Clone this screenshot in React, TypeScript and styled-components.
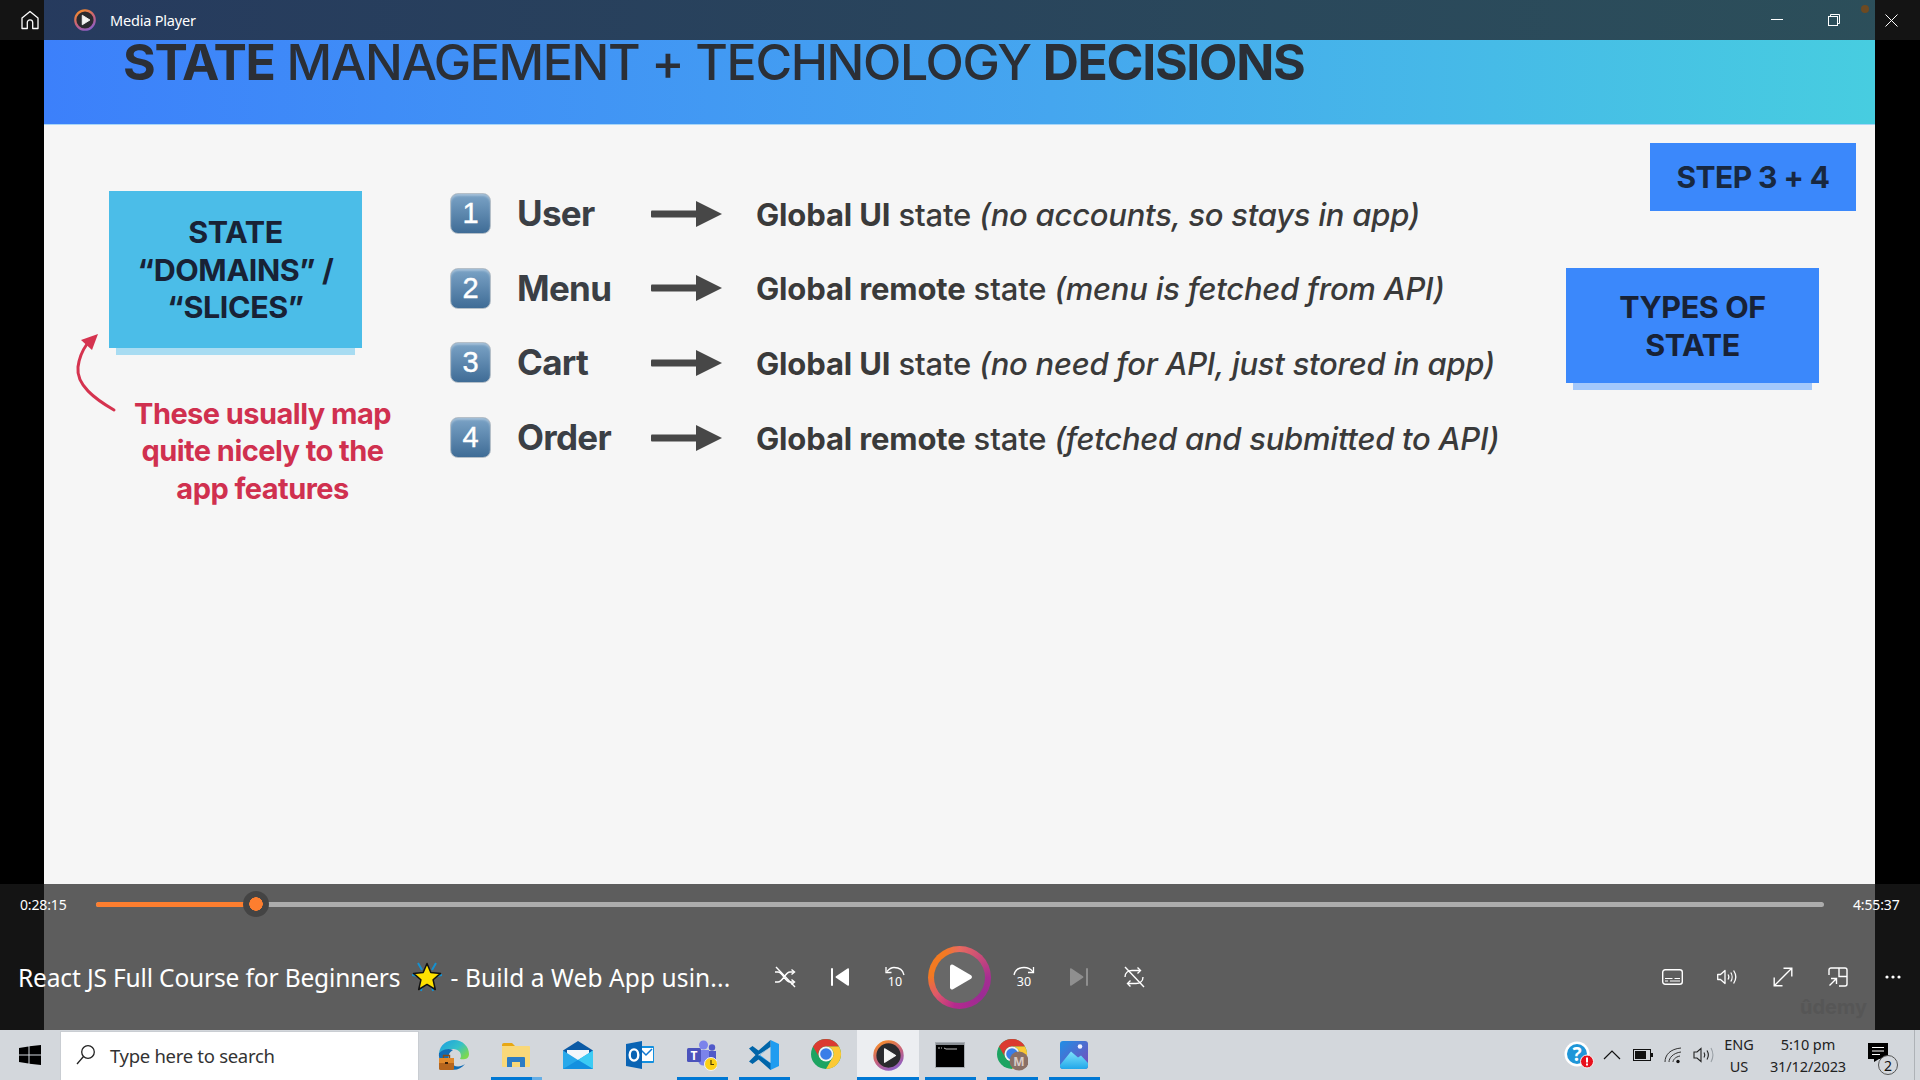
import React from 'react';
import styled, { createGlobalStyle } from 'styled-components';

const UI_FONT = `"Noto Sans", "Open Sans", sans-serif`;
const SLIDE_FONT = `Inter, "Liberation Sans", sans-serif`;

const GlobalStyle = createGlobalStyle`
  html, body {
    margin: 0;
    padding: 0;
    background: #000;
    overflow: hidden;
  }
  * {
    box-sizing: border-box;
  }
`;

const SEEK_PERCENT = 9.26;

const ROWS = [
  { n: 1, name: 'User', bold: 'Global UI', note: '(no accounts, so stays in app)' },
  { n: 2, name: 'Menu', bold: 'Global remote', note: '(menu is fetched from API)' },
  { n: 3, name: 'Cart', bold: 'Global UI', note: '(no need for API, just stored in app)' },
  { n: 4, name: 'Order', bold: 'Global remote', note: '(fetched and submitted to API)' },
];

/* title bar icons */
const HomeIcon = () => (
  <svg width="20" height="20" viewBox="0 0 20 20" fill="none" stroke="#fff" strokeWidth="1.3">
    <path d="M2 18.5V8L10 1.5L18 8V18.5H12.7V12.5a2.7 2.7 0 0 0-5.4 0V18.5Z" strokeLinejoin="round" />
  </svg>
);

const PlayerLogo = ({ size }: { size: number }) => (
  <svg width={size} height={size} viewBox="0 0 24 24">
    <defs>
      <linearGradient id={`lg${size}`} x1="0.2" y1="0" x2="0.7" y2="1">
        <stop offset="0" stopColor="#f58a2c" />
        <stop offset="0.55" stopColor="#c4607e" />
        <stop offset="1" stopColor="#8e5fc4" />
      </linearGradient>
    </defs>
    <circle cx="12" cy="12" r="10.6" fill="#2a2a2e" stroke={`url(#lg${size})`} strokeWidth="2.4" />
    <path d="M9 6.8L17.4 12L9 17.2Z" fill="#f4f4f4" stroke="#f4f4f4" strokeWidth="1" strokeLinejoin="round" />
  </svg>
);

const MinIcon = () => (
  <svg width="12" height="2" viewBox="0 0 12 2"><rect width="12" height="1" fill="#fff" /></svg>
);

const RestoreIcon = () => (
  <svg width="12" height="12" viewBox="0 0 12 12" fill="none" stroke="#fff" strokeWidth="1">
    <rect x="0.5" y="2.5" width="9" height="9" />
    <path d="M2.5 2.5V0.5H11.5V9.5H9.5" />
  </svg>
);

const CloseIcon = () => (
  <svg width="13" height="13" viewBox="0 0 13 13" stroke="#fff" strokeWidth="1">
    <path d="M0.5 0.5L12.5 12.5M12.5 0.5L0.5 12.5" />
  </svg>
);

/* slide */
const CurvedArrow = () => (
  <svg width="50" height="90" viewBox="0 0 50 90" fill="none">
    <path d="M41 81C22 70 3 56 5 38C6 30 9 22 14 15" stroke="#d5334f" strokeWidth="3" strokeLinecap="round" />
    <path d="M25 5L8 11L19 21Z" fill="#d5334f" />
  </svg>
);

const RowArrow = () => (
  <svg width="71" height="26" viewBox="0 0 71 26">
    <rect x="0" y="9.5" width="48" height="7" rx="1" fill="#474747" />
    <path d="M45 0L71 13L45 26Z" fill="#474747" />
  </svg>
);

/* player controls */
const ShuffleIcon = () => (
  <svg width="22" height="22" viewBox="0 0 22 22" fill="none" stroke="#fff" strokeWidth="1.4">
    <path d="M1 6H4C9 6 11 16 16 16H20M1 16H4C9 16 11 6 16 6H20" />
    <path d="M17.5 3.5L20.5 6L17.5 8.5M17.5 13.5L20.5 16L17.5 18.5" />
    <path d="M2 1L21 21" />
  </svg>
);

const SkipIcon = ({ next }: { next?: boolean }) => (
  <svg width="20" height="20" viewBox="0 0 20 20" fill={next ? '#8f8f8f' : '#fff'}>
    <g transform={next ? 'matrix(-1 0 0 1 20 0)' : undefined}>
      <rect x="1" y="1" width="2" height="18" rx="1" />
      <path d="M19 2.2V17.8a1 1 0 0 1-1.5 .8L6 10.8a1 1 0 0 1 0-1.6L17.5 1.4a1 1 0 0 1 1.5 .8Z" />
    </g>
  </svg>
);

const JumpIcon = ({ label, forward }: { label: string; forward?: boolean }) => (
  <svg width="24" height="26" viewBox="0 -2 24 26" fill="none" stroke="#fff" strokeWidth="1.3">
    {forward ? (
      <g>
        <path d="M2 9C3 4 7 1.500 12 1.500C16 1.500 19 3 21 6" />
        <path d="M21.500 1V6.500H16" />
      </g>
    ) : (
      <g>
        <path d="M21 9C20 4 16 1.500 11 1.500C8 1.500 6 3 4 5.500" />
        <path d="M3 1V6.500H8.500" />
      </g>
    )}
    <text x="12" y="20" textAnchor="middle" fontSize="12.5" fill="#fff" stroke="none" fontFamily={UI_FONT}>{label}</text>
  </svg>
);

const RepeatOffIcon = () => (
  <svg width="22" height="22" viewBox="0 0 22 22" fill="none" stroke="#fff" strokeWidth="1.4">
    <path d="M2 11C2 7 5 4.500 9 4.500H17M20 11C20 15 17 17.500 13 17.500H5" />
    <path d="M14.500 1.500L17.500 4.500L14.500 7.500M7.500 14.500L4.500 17.500L7.500 20.500" />
    <path d="M2 1L21 21" />
  </svg>
);

const PlayIcon = () => (
  <svg width="24" height="28" viewBox="0 0 24 28" fill="#fff">
    <path d="M1 3.500V24.500a2 2 0 0 0 3 1.700L22 15.700a2 2 0 0 0 0-3.400L4 1.800a2 2 0 0 0-3 1.700Z" />
  </svg>
);

const CaptionsIcon = () => (
  <svg width="21" height="16" viewBox="0 0 21 16" fill="none" stroke="#fff" strokeWidth="1.4">
    <rect x="0.7" y="0.7" width="19.600" height="14.600" rx="2.500" />
    <path d="M3 9.500H10.500M12.500 9.500H18M3 12H6M8 12H18" strokeWidth="1.200" />
  </svg>
);

const VolumeIcon = () => (
  <svg width="21" height="16" viewBox="0 0 21 16" fill="none" stroke="#fff" strokeWidth="1.300">
    <path d="M0.700 5.500H3.500L8 1.500V14.500L3.500 10.500H0.700Z" strokeLinejoin="round" />
    <path d="M11 5.500C12 7 12 9 11 10.500M13.800 3.500C15.500 6 15.500 10 13.800 12.500M16.600 1.500C19.300 5.500 19.300 10.500 16.600 14.500" />
  </svg>
);

const ExpandIcon = () => (
  <svg width="20" height="20" viewBox="0 0 20 20" fill="none" stroke="#fff" strokeWidth="1.400">
    <path d="M1.500 18.500L18.500 1.500M10.500 1.200H18.800V9.500M1.200 10.500V18.800H9.500" />
  </svg>
);

const MiniIcon = () => (
  <svg width="20" height="20" viewBox="0 0 20 20" fill="none" stroke="#fff" strokeWidth="1.400">
    <path d="M1 8V3a2 2 0 0 1 2-2H17a2 2 0 0 1 2 2V17a2 2 0 0 1-2 2H11" />
    <path d="M11 1V9.500H19" />
    <path d="M1.500 18.500L8 12M3 11.500H8.500V17" />
  </svg>
);

const DotsIcon = () => (
  <svg width="16" height="4" viewBox="0 0 16 4" fill="#fff">
    <circle cx="2" cy="2" r="1.600" />
    <circle cx="8" cy="2" r="1.600" />
    <circle cx="14" cy="2" r="1.600" />
  </svg>
);

const StarIcon = () => (
  <svg width="30" height="30" viewBox="0 0 30 30">
    <g stroke="#1590cf" strokeWidth="2">
      <path d="M6 1L10 8M24 1L20 8M0 13L5 14M30 13L25 14M9 29L10 24M21 29L20 24" />
    </g>
    <path d="M15 1.500L18.800 10.500L28.500 11.400L21.100 17.800L23.300 27.500L15 22.400L6.700 27.500L8.900 17.800L1.500 11.400L11.200 10.500Z" fill="#ffe100" stroke="#111" strokeWidth="1.500" strokeLinejoin="round" />
  </svg>
);

/* taskbar */
const WindowsIcon = () => (
  <svg width="22" height="20" viewBox="0 0 22 20" fill="#000">
    <path d="M0 2.900L9.500 1.500V9.500H0ZM10.500 1.300L22 0V9.500H10.500ZM0 10.500H9.500V18.500L0 17.100ZM10.500 10.500H22V20L10.500 18.700Z" />
  </svg>
);

const SearchIcon = () => (
  <svg width="20" height="22" viewBox="0 0 20 22" fill="none" stroke="#222" strokeWidth="1.300">
    <circle cx="12" cy="8" r="6.300" />
    <path d="M7.500 12.500L1 20" />
  </svg>
);

const EdgeIcon = () => (
  <svg width="32" height="32" viewBox="0 0 32 32">
    <defs>
      <linearGradient id="edgeA" x1="0" y1="0" x2="1" y2="0.700">
        <stop offset="0" stopColor="#1b9de2" />
        <stop offset="0.6" stopColor="#35c1c8" />
        <stop offset="1" stopColor="#7dd84f" />
      </linearGradient>
    </defs>
    <path d="M1 14C2 6 9 1 16 1C25 1 31 8 31 15C31 20 26 21 22 20C24 17 23 12 18 10.500C11 9 5 11 1 14Z" fill="url(#edgeA)" />
    <path d="M1 14C5 10 11 9 15 11C11 13 9 18 12 23C15 28 22 29 27 25C23 30 17 32 12 30C5 28 0 21 1 14Z" fill="#0f6cb5" />
    <rect x="1" y="19" width="15" height="12" rx="1.500" fill="#b5651d" />
    <rect x="1" y="19" width="15" height="5" fill="#e0892b" />
    <path d="M5.500 19V16.500H11.500V19" fill="none" stroke="#8a4a12" strokeWidth="1.400" />
    <rect x="7" y="23" width="3" height="2" fill="#3d2208" />
  </svg>
);

const FolderIcon = () => (
  <svg width="28" height="24" viewBox="0 0 28 24">
    <path d="M0 2a2 2 0 0 1 2-2H10L13 3H0Z" fill="#e8a713" />
    <rect x="0" y="3" width="28" height="21" rx="1" fill="#f9d879" />
    <path d="M5 24V15a1 1 0 0 1 1-1H22a1 1 0 0 1 1 1V24H18V19H10V24Z" fill="#2c7cc4" />
  </svg>
);

const MailIcon = () => (
  <svg width="30" height="28" viewBox="0 0 30 28">
    <path d="M0 9.500L15 0L30 9.500V12H0Z" fill="#0b5aa5" />
    <path d="M4 9H26V16L15 21L4 16Z" fill="#f3f7fb" />
    <path d="M0 9.500L15 19L30 9.500V28H0Z" fill="#28a8ea" />
    <path d="M15 19L30 9.500V28Z" fill="#3ccbf4" />
    <path d="M0 28L15 19L30 28Z" fill="#1490df" />
  </svg>
);

const OutlookIcon = () => (
  <svg width="28" height="28" viewBox="0 0 28 28">
    <rect x="12" y="5" width="16" height="17" rx="1" fill="#1490df" />
    <rect x="14" y="7" width="13" height="13" fill="#fff" />
    <path d="M15 9L20 14L26 8" fill="none" stroke="#0f78d4" strokeWidth="1.500" />
    <path d="M0 3L16 0V28L0 25Z" fill="#0a64b4" />
    <ellipse cx="8" cy="14" rx="4.300" ry="5.600" fill="none" stroke="#fff" strokeWidth="2.400" />
  </svg>
);

const TeamsIcon = () => (
  <svg width="30" height="31" viewBox="0 0 30 31">
    <circle cx="16.500" cy="5" r="4.500" fill="#7b83eb" />
    <circle cx="25" cy="7.500" r="3.200" fill="#5059c9" />
    <path d="M11 10H22V20a5.500 5.500 0 0 1-11 0Z" fill="#7b83eb" />
    <path d="M22 11H29V19a4 4 0 0 1-7 2Z" fill="#5059c9" />
    <rect x="0" y="8" width="14" height="14" rx="1.500" fill="#4b53bc" />
    <text x="7" y="19.500" textAnchor="middle" fontSize="12" fontWeight="700" fill="#fff" fontFamily={UI_FONT}>T</text>
    <circle cx="24" cy="24" r="6.500" fill="#fcd116" stroke="#f4f4f4" strokeWidth="1" />
    <path d="M24 20V24.500H27" fill="none" stroke="#4a3b00" strokeWidth="1.200" />
  </svg>
);

const VSCodeIcon = () => (
  <svg width="30" height="30" viewBox="0 0 30 30">
    <path d="M21.500 0L30 4V26L21.500 30L8 17L21.500 7Z" fill="#1f9cf0" />
    <path d="M21.500 0L21.500 7L9 15L21.500 23V30L9.500 19.500L3.500 24L0 21.500L6.500 15L0 8.500L3.500 6L9.500 10.500Z" fill="#0065a9" />
    <path d="M21.500 7V23L11 15Z" fill="#d3d7dc" />
  </svg>
);

const ChromeIcon = ({ badge }: { badge?: boolean }) => (
  <svg width="32" height="32" viewBox="-1 0 32 32">
    <circle cx="15" cy="15" r="15" fill="#1da462" />
    <path d="M15 0A15 15 0 0 1 28 7.500H15A7.500 7.500 0 0 0 8.500 18.800L2 7.500A15 15 0 0 1 15 0Z" fill="#db3a30" />
    <path d="M28 7.500A15 15 0 0 1 15 30L21.500 18.800A7.500 7.500 0 0 0 15 7.500Z" fill="#fcc934" />
    <circle cx="15" cy="15" r="7.500" fill="#f4f4f4" />
    <circle cx="15" cy="15" r="5.800" fill="#3a7ee8" />
    {badge && (
      <g>
        <circle cx="22" cy="22" r="9.500" fill="#8a7066" />
        <text x="22" y="26.500" textAnchor="middle" fontSize="12" fontWeight="700" fill="#d9ccc6" fontFamily={UI_FONT}>M</text>
      </g>
    )}
  </svg>
);

const CmdIcon = () => (
  <svg width="30" height="26" viewBox="0 0 30 26">
    <rect x="0.500" y="0.500" width="29" height="25" fill="#000" stroke="#a7acb2" />
    <rect x="1" y="1" width="28" height="2" fill="#8a8f95" />
    <path d="M3 6H5M6 6H7M9 6L11 7H22" stroke="#bbb" strokeWidth="1" fill="none" />
  </svg>
);

const PhotosIcon = () => (
  <svg width="28" height="28" viewBox="0 0 28 28">
    <defs>
      <linearGradient id="photoBg" x1="0" y1="0" x2="1" y2="1">
        <stop offset="0" stopColor="#1f8fe6" />
        <stop offset="1" stopColor="#7d4ab8" />
      </linearGradient>
      <linearGradient id="photoHill" x1="0" y1="0" x2="0" y2="1">
        <stop offset="0" stopColor="#7fe3fb" />
        <stop offset="1" stopColor="#21a7ea" />
      </linearGradient>
    </defs>
    <rect width="28" height="28" rx="3" fill="url(#photoBg)" />
    <circle cx="20" cy="5.500" r="2.300" fill="#f1f3ff" />
    <path d="M0 24L11 10.500L18 16.500L21 14.500L28 22V25a3 3 0 0 1-3 3H3a3 3 0 0 1-3-3Z" fill="url(#photoHill)" />
  </svg>
);

const HelpIcon = () => (
  <svg width="30" height="28" viewBox="0 0 30 28">
    <circle cx="13" cy="13" r="12.500" fill="#fff" />
    <circle cx="13" cy="13" r="10" fill="#1f96d8" />
    <text x="13" y="20" textAnchor="middle" fontSize="19" fontWeight="700" fill="#fff" fontFamily={UI_FONT}>?</text>
    <circle cx="23" cy="20.500" r="6.500" fill="#e8101c" stroke="#f3f3f3" strokeWidth="1" />
    <rect x="22" y="16.500" width="2" height="5" fill="#fff" />
    <rect x="22" y="22.500" width="2" height="2" fill="#fff" />
  </svg>
);

const ChevronIcon = () => (
  <svg width="18" height="10" viewBox="0 0 18 10" fill="none" stroke="#111" strokeWidth="1.200">
    <path d="M1 9L9 1L17 9" />
  </svg>
);

const BatteryIcon = () => (
  <svg width="20" height="12" viewBox="0 0 20 12">
    <rect x="0.500" y="0.500" width="17" height="11" fill="none" stroke="#111" />
    <rect x="2" y="2" width="11" height="8" fill="#111" />
    <rect x="18" y="4" width="2" height="4" fill="#111" />
  </svg>
);

const WifiIcon = () => (
  <svg width="18" height="17" viewBox="0 0 18 17" fill="none" stroke="#333" strokeWidth="1">
    <path d="M1 15C1 8 6 2 17 1M5 15C5 11 9 6 17 5M9 15C9 13 11 10 16 9" />
    <circle cx="14" cy="14.500" r="1.700" fill="#111" stroke="none" />
  </svg>
);

const TraySpeakerIcon = () => (
  <svg width="21" height="16" viewBox="0 0 21 16" fill="none" stroke="#222" strokeWidth="1.100">
    <path d="M1 5H4L8 1.500V14.500L4 11H1Z" />
    <path d="M11 5.500C12 7 12 9 11 10.500M14 3.500C15.500 6 15.500 10 14 12.500" />
    <path d="M18 1C20.500 5.500 20.500 10.500 18 15" stroke="#9aa0a6" />
  </svg>
);

const NotificationIcon = () => (
  <svg width="22" height="19" viewBox="0 0 22 19">
    <path d="M0 0H20V16H11L6 19V16H0Z" fill="#000" />
    <path d="M4 4.500H16M4 8H16M4 11.500H12" stroke="#fff" strokeWidth="1" />
  </svg>
);

const App = () => {
  return (
    <Page>
      <GlobalStyle />
      <TitleBar>
        <HomeButton><HomeIcon /></HomeButton>
        <LogoWrap><PlayerLogo size={22} /></LogoWrap>
        <AppName>Media Player</AppName>
        <WindowButtons>
          <WindowButton><MinIcon /></WindowButton>
          <WindowButton><RestoreIcon /></WindowButton>
          <RecordDot />
          <CloseButton><CloseIcon /></CloseButton>
        </WindowButtons>
      </TitleBar>

      <Stage>
        <Slide>
          <SlideHeader>
            <SlideTitle>
              <b>STATE</b> MANAGEMENT + TECHNOLOGY <b>DECISIONS</b>
            </SlideTitle>
          </SlideHeader>
          <SlideBody>
            <LeftColumn>
              <Sticky $tone="cyan" $width={253} $height={157}>
                STATE<br />“DOMAINS” /<br />“SLICES”
              </Sticky>
              <ArrowSpot><CurvedArrow /></ArrowSpot>
              <RedNote>These usually map<br />quite nicely to the<br />app features</RedNote>
            </LeftColumn>
            <DomainList>
              {ROWS.map((r) => (
                <DomainRow key={r.n}>
                  <KeyCap>{r.n}</KeyCap>
                  <DomainName>{r.name}</DomainName>
                  <RowArrow />
                  <DomainDesc>
                    <b>{r.bold}</b> state <i>{r.note}</i>
                  </DomainDesc>
                </DomainRow>
              ))}
            </DomainList>
            <RightColumn>
              <StepBox>STEP 3 + 4</StepBox>
              <TypesWrap>
                <Sticky $tone="blue" $width={253} $height={115}>TYPES OF<br />STATE</Sticky>
              </TypesWrap>
            </RightColumn>
          </SlideBody>
        </Slide>
      </Stage>

      <Controls>
        <SeekRow>
          <TimeLabel>0:28:15</TimeLabel>
          <Track>
            <TrackFill style={{ width: `${SEEK_PERCENT}%` }} />
            <Thumb style={{ left: `${SEEK_PERCENT}%` }} />
          </Track>
          <TimeLabel $end>4:55:37</TimeLabel>
        </SeekRow>
        <PlayRow>
          <MediaTitle>
            React JS Full Course for Beginners <StarSpot><StarIcon /></StarSpot><TitleTail>- Build a Web App usin...</TitleTail>
          </MediaTitle>
          <ButtonGroup>
            <CtrlButton><ShuffleIcon /></CtrlButton>
            <CtrlButton><SkipIcon /></CtrlButton>
            <CtrlButton><JumpIcon label="10" /></CtrlButton>
            <PlaySlot>
              <PlayRing><PlayInner><PlayIcon /></PlayInner></PlayRing>
            </PlaySlot>
            <CtrlButton><JumpIcon label="30" forward /></CtrlButton>
            <CtrlButton><SkipIcon next /></CtrlButton>
            <CtrlButton><RepeatOffIcon /></CtrlButton>
          </ButtonGroup>
          <RightButtons>
            <CtrlButton><CaptionsIcon /></CtrlButton>
            <CtrlButton><VolumeIcon /></CtrlButton>
            <CtrlButton><ExpandIcon /></CtrlButton>
            <CtrlButton><MiniIcon /></CtrlButton>
            <CtrlButton><DotsIcon /></CtrlButton>
          </RightButtons>
          <Watermark>ûdemy</Watermark>
        </PlayRow>
      </Controls>

      <Taskbar>
        <StartButton><WindowsIcon /></StartButton>
        <SearchBox>
          <SearchIcon />
          <SearchText>Type here to search</SearchText>
        </SearchBox>
        <AppSlots>
          <AppSlot><EdgeIcon /></AppSlot>
          <AppSlot $running $split><FolderIcon /></AppSlot>
          <AppSlot><MailIcon /></AppSlot>
          <AppSlot><OutlookIcon /></AppSlot>
          <AppSlot $running><TeamsIcon /></AppSlot>
          <AppSlot $running><VSCodeIcon /></AppSlot>
          <AppSlot><ChromeIcon /></AppSlot>
          <AppSlot $running $active><PlayerLogo size={31} /></AppSlot>
          <AppSlot $running><CmdIcon /></AppSlot>
          <AppSlot $running><ChromeIcon badge /></AppSlot>
          <AppSlot $running><PhotosIcon /></AppSlot>
        </AppSlots>
        <Tray>
          <TrayCell $width={32}><HelpIcon /></TrayCell>
          <TrayCell $width={33}><ChevronIcon /></TrayCell>
          <TrayCell $width={30}><BatteryIcon /></TrayCell>
          <TrayCell $width={30}><WifiIcon /></TrayCell>
          <TrayCell $width={30}><TraySpeakerIcon /></TrayCell>
          <TrayText $width={42}><span>ENG</span><span>US</span></TrayText>
          <TrayText $width={96}><span>5:10 pm</span><span>31/12/2023</span></TrayText>
          <NotifySlot>
            <NotificationIcon />
            <NotifyBadge>2</NotifyBadge>
          </NotifySlot>
          <ShowDesktop />
        </Tray>
      </Taskbar>
    </Page>
  );
};

export default App;

const Page = styled.div`
  display: flex;
  flex-direction: column;
  width: 1920px;
  height: 1080px;
  overflow: hidden;
  font-family: ${UI_FONT};
`;

const TitleBar = styled.header`
  display: flex;
  align-items: center;
  height: 40px;
  flex: none;
  background: linear-gradient(to right, #263a5e, #2c4f5a);
  color: #fff;
`;

const HomeButton = styled.div`
  display: flex;
  align-items: center;
  justify-content: flex-end;
  width: 44px;
  height: 100%;
  padding-right: 4px;
  background: #141414;
`;

const LogoWrap = styled.div`
  display: flex;
  margin-left: 30px;
`;

const AppName = styled.span`
  margin-left: 14px;
  font-size: 14.5px;
  letter-spacing: -0.2px;
`;

const WindowButtons = styled.div`
  position: relative;
  display: flex;
  align-items: center;
  height: 100%;
  margin-left: auto;
`;

const WindowButton = styled.div`
  display: flex;
  align-items: center;
  justify-content: center;
  width: 57px;
  height: 100%;
`;

const RecordDot = styled.div`
  position: absolute;
  right: 51px;
  top: 5px;
  width: 8px;
  height: 8px;
  border-radius: 50%;
  background: #6d4a22;
`;

const CloseButton = styled.div`
  display: flex;
  align-items: center;
  width: 45px;
  height: 100%;
  margin-left: 13px;
  padding-left: 10px;
  background: #141414;
`;

const Stage = styled.main`
  display: flex;
  flex: 1;
  min-height: 0;
  padding-left: 44px;
  background: #000;
`;

const Slide = styled.section`
  display: flex;
  flex-direction: column;
  width: 1831px;
  background: #f6f6f6;
  font-family: ${SLIDE_FONT};
`;

const SlideHeader = styled.div`
  flex: none;
  height: 85px;
  padding: 1px 0 0 79px;
  background: linear-gradient(to right, #3c80fb, #45a6ef 55%, #47cde0);
  border-bottom: 1px solid #a9d6f7;
`;

const SlideTitle = styled.h1`
  margin: 0;
  font-size: 50px;
  line-height: 42px;
  font-weight: 500;
  letter-spacing: -1.35px;
  color: #2b2f36;
  white-space: nowrap;

  b {
    font-weight: 700;
  }
`;

const SlideBody = styled.div`
  display: flex;
  flex: 1;
  padding: 18px 19px 0 65px;
`;

const LeftColumn = styled.div`
  position: relative;
  flex: none;
  width: 281px;
  margin-top: 48px;
`;

const Sticky = styled.div<{ $tone: 'cyan' | 'blue'; $width: number; $height: number }>`
  display: flex;
  align-items: center;
  justify-content: center;
  width: ${(p) => p.$width}px;
  height: ${(p) => p.$height}px;
  background: ${(p) => (p.$tone === 'cyan' ? '#4bbde8' : '#3b88fb')};
  box-shadow: 0 14px 0 -7px ${(p) => (p.$tone === 'cyan' ? '#a8dcf2' : '#a3c8fb')};
  font-size: 30.500px;
  line-height: 37.500px;
  font-weight: 700;
  letter-spacing: -0.4px;
  text-align: center;
  color: #182236;
`;

const ArrowSpot = styled.div`
  position: absolute;
  left: -36px;
  top: 138px;
`;

const RedNote = styled.p`
  width: 257px;
  margin: 46.500px 0 0 25px;
  font-size: 29px;
  line-height: 37.700px;
  font-weight: 700;
  letter-spacing: -0.55px;
  text-align: center;
  white-space: nowrap;
  color: #d0304f;
`;

const DomainList = styled.div`
  display: flex;
  flex-direction: column;
  gap: 33.700px;
  margin: 50px 0 0 60px;
`;

const DomainRow = styled.div`
  display: flex;
  align-items: center;
  height: 41px;
  white-space: nowrap;
`;

const KeyCap = styled.div`
  display: flex;
  align-items: center;
  justify-content: center;
  flex: none;
  width: 41px;
  height: 41px;
  border-radius: 8px;
  border: 1px solid #b5bfc8;
  background: linear-gradient(to bottom, #7ba3c6, #3f6c96);
  box-shadow: inset 0 2px 2px rgba(255, 255, 255, 0.3);
  font-family: "Liberation Sans", sans-serif;
  font-size: 29px;
  -webkit-text-stroke: 0.4px #fff;
  color: #fff;
`;

const DomainName = styled.span`
  flex: none;
  width: 134px;
  margin-left: 26px;
  padding-bottom: 1px;
  font-size: 35px;
  font-weight: 700;
  letter-spacing: -0.7px;
  color: #3b3f45;
`;

const DomainDesc = styled.span`
  margin-left: 34px;
  padding-top: 1px;
  font-size: 31px;
  font-weight: 500;
  letter-spacing: -0.15px;
  color: #3a3a3a;

  b {
    font-weight: 700;
  }

  i {
    letter-spacing: -0.25px;
  }
`;

const RightColumn = styled.div`
  display: flex;
  flex-direction: column;
  align-items: flex-end;
  margin-left: auto;
`;

const StepBox = styled.div`
  display: flex;
  align-items: center;
  justify-content: center;
  width: 206px;
  height: 68px;
  background: #3b88fb;
  font-size: 30px;
  font-weight: 700;
  letter-spacing: -0.55px;
  color: #182840;
`;

const TypesWrap = styled.div`
  margin: 57px 37px 0 0;
`;

const Controls = styled.div`
  display: flex;
  flex-direction: column;
  flex: none;
  height: 146px;
  background: linear-gradient(to right, #141414 44px, #5d5d5d 44px, #5d5d5d 1875px, #141414 1875px);
  color: #fff;
`;

const SeekRow = styled.div`
  display: grid;
  grid-template-columns: 96px 1fr 96px;
  align-items: center;
  flex: none;
  height: 40px;
`;

const TimeLabel = styled.span<{ $end?: boolean }>`
  padding-left: ${(p) => (p.$end ? '29px' : '20px')};
  font-size: 14px;
  letter-spacing: -0.15px;
`;

const Track = styled.div`
  position: relative;
  height: 5px;
  border-radius: 3px;
  background: #acacac;
`;

const TrackFill = styled.div`
  height: 100%;
  border-radius: 3px;
  background: #fd7e2f;
`;

const Thumb = styled.div`
  position: absolute;
  top: 50%;
  width: 26px;
  height: 26px;
  border-radius: 50%;
  background: radial-gradient(circle, #fd7e2f 0 6.500px, #444 7px);
  transform: translate(-50%, -50%);
`;

const PlayRow = styled.div`
  position: relative;
  display: flex;
  align-items: center;
  flex: 1;
`;

const MediaTitle = styled.div`
  flex: none;
  display: flex;
  align-items: center;
  width: 757.500px;
  padding-left: 18px;
  font-size: 24.500px;
  letter-spacing: -0.15px;
  white-space: pre;
`;

const StarSpot = styled.span`
  display: inline-flex;
  margin: 0 4px 0 5px;
`;

const TitleTail = styled.span`
  margin-left: 5px;
  letter-spacing: 0.1px;
`;

const ButtonGroup = styled.div`
  display: flex;
  align-items: center;
`;

const CtrlButton = styled.div`
  display: flex;
  align-items: center;
  justify-content: center;
  width: 55px;
  height: 55px;
`;

const PlaySlot = styled.div`
  display: flex;
  justify-content: center;
  width: 74px;
`;

const PlayRing = styled.div`
  display: flex;
  align-items: center;
  justify-content: center;
  width: 63px;
  height: 63px;
  border-radius: 50%;
  background: conic-gradient(#e86a60 0deg, #a72d92 90deg, #9a2c94 130deg, #b52a8e 190deg, #e05a68 235deg, #f37a20 275deg, #f37a22 330deg, #e86a60 360deg);
`;

const PlayInner = styled.div`
  display: flex;
  align-items: center;
  justify-content: center;
  width: 51px;
  height: 51px;
  padding-left: 3px;
  border-radius: 50%;
  background: #686868;
`;

const RightButtons = styled.div`
  display: flex;
  align-items: center;
  margin-left: auto;
`;

const Watermark = styled.span`
  position: absolute;
  left: 1800px;
  top: 71px;
  font-family: ${SLIDE_FONT};
  font-size: 20px;
  font-weight: 700;
  color: #565656;
`;

const Taskbar = styled.footer`
  display: flex;
  align-items: center;
  flex: none;
  height: 50px;
  background: #d3d7dc;
`;

const StartButton = styled.div`
  display: flex;
  align-items: center;
  justify-content: center;
  flex: none;
  width: 60px;
  height: 100%;
`;

const SearchBox = styled.div`
  display: flex;
  align-items: center;
  flex: none;
  width: 359px;
  height: 49px;
  margin-top: 1px;
  padding: 0 0 2px 15px;
  background: #fff;
  border: 1px solid #c9cdd2;
  border-bottom: 0;
`;

const SearchText = styled.span`
  margin-left: 14px;
  font-size: 18.500px;
  letter-spacing: -0.3px;
  color: #333;
`;

const AppSlots = styled.div`
  display: flex;
  height: 100%;
  margin-left: 4px;
`;

const AppSlot = styled.div<{ $running?: boolean; $active?: boolean; $split?: boolean }>`
  position: relative;
  display: flex;
  align-items: center;
  justify-content: center;
  width: 62px;
  height: 100%;
  background: ${(p) => (p.$active ? '#eceef1' : 'transparent')};

  &::after {
    content: '';
    display: ${(p) => (p.$running ? 'block' : 'none')};
    position: absolute;
    bottom: 0;
    left: ${(p) => (p.$active ? '0' : '5.500px')};
    right: ${(p) => (p.$active ? '0' : '5.500px')};
    height: 3px;
    background: ${(p) => (p.$split ? 'linear-gradient(to right, #0078d4 80%, #65aee6 80%)' : '#0078d4')};
  }
`;

const Tray = styled.div`
  display: flex;
  align-items: center;
  height: 100%;
  margin-left: auto;
`;

const TrayCell = styled.div<{ $width: number }>`
  display: flex;
  align-items: center;
  justify-content: center;
  width: ${(p) => p.$width}px;
  height: 100%;
`;

const TrayText = styled.div<{ $width: number }>`
  display: flex;
  flex-direction: column;
  align-items: center;
  justify-content: center;
  gap: 2px;
  width: ${(p) => p.$width}px;
  font-size: 14.500px;
  line-height: 20px;
  letter-spacing: -0.1px;
  color: #222;
`;

const NotifySlot = styled.div`
  position: relative;
  display: flex;
  align-items: center;
  width: 56px;
  height: 100%;
  margin-left: 2px;
  padding: 0 0 6px 10px;
`;

const NotifyBadge = styled.span`
  position: absolute;
  left: 20px;
  top: 25px;
  display: flex;
  align-items: center;
  justify-content: center;
  width: 20px;
  height: 20px;
  border-radius: 50%;
  border: 1px solid #555;
  background: #d3d7dc;
  font-size: 14px;
  color: #111;
`;

const ShowDesktop = styled.div`
  width: 6px;
  height: 100%;
  border-left: 1px solid #aeb2b7;
`;
